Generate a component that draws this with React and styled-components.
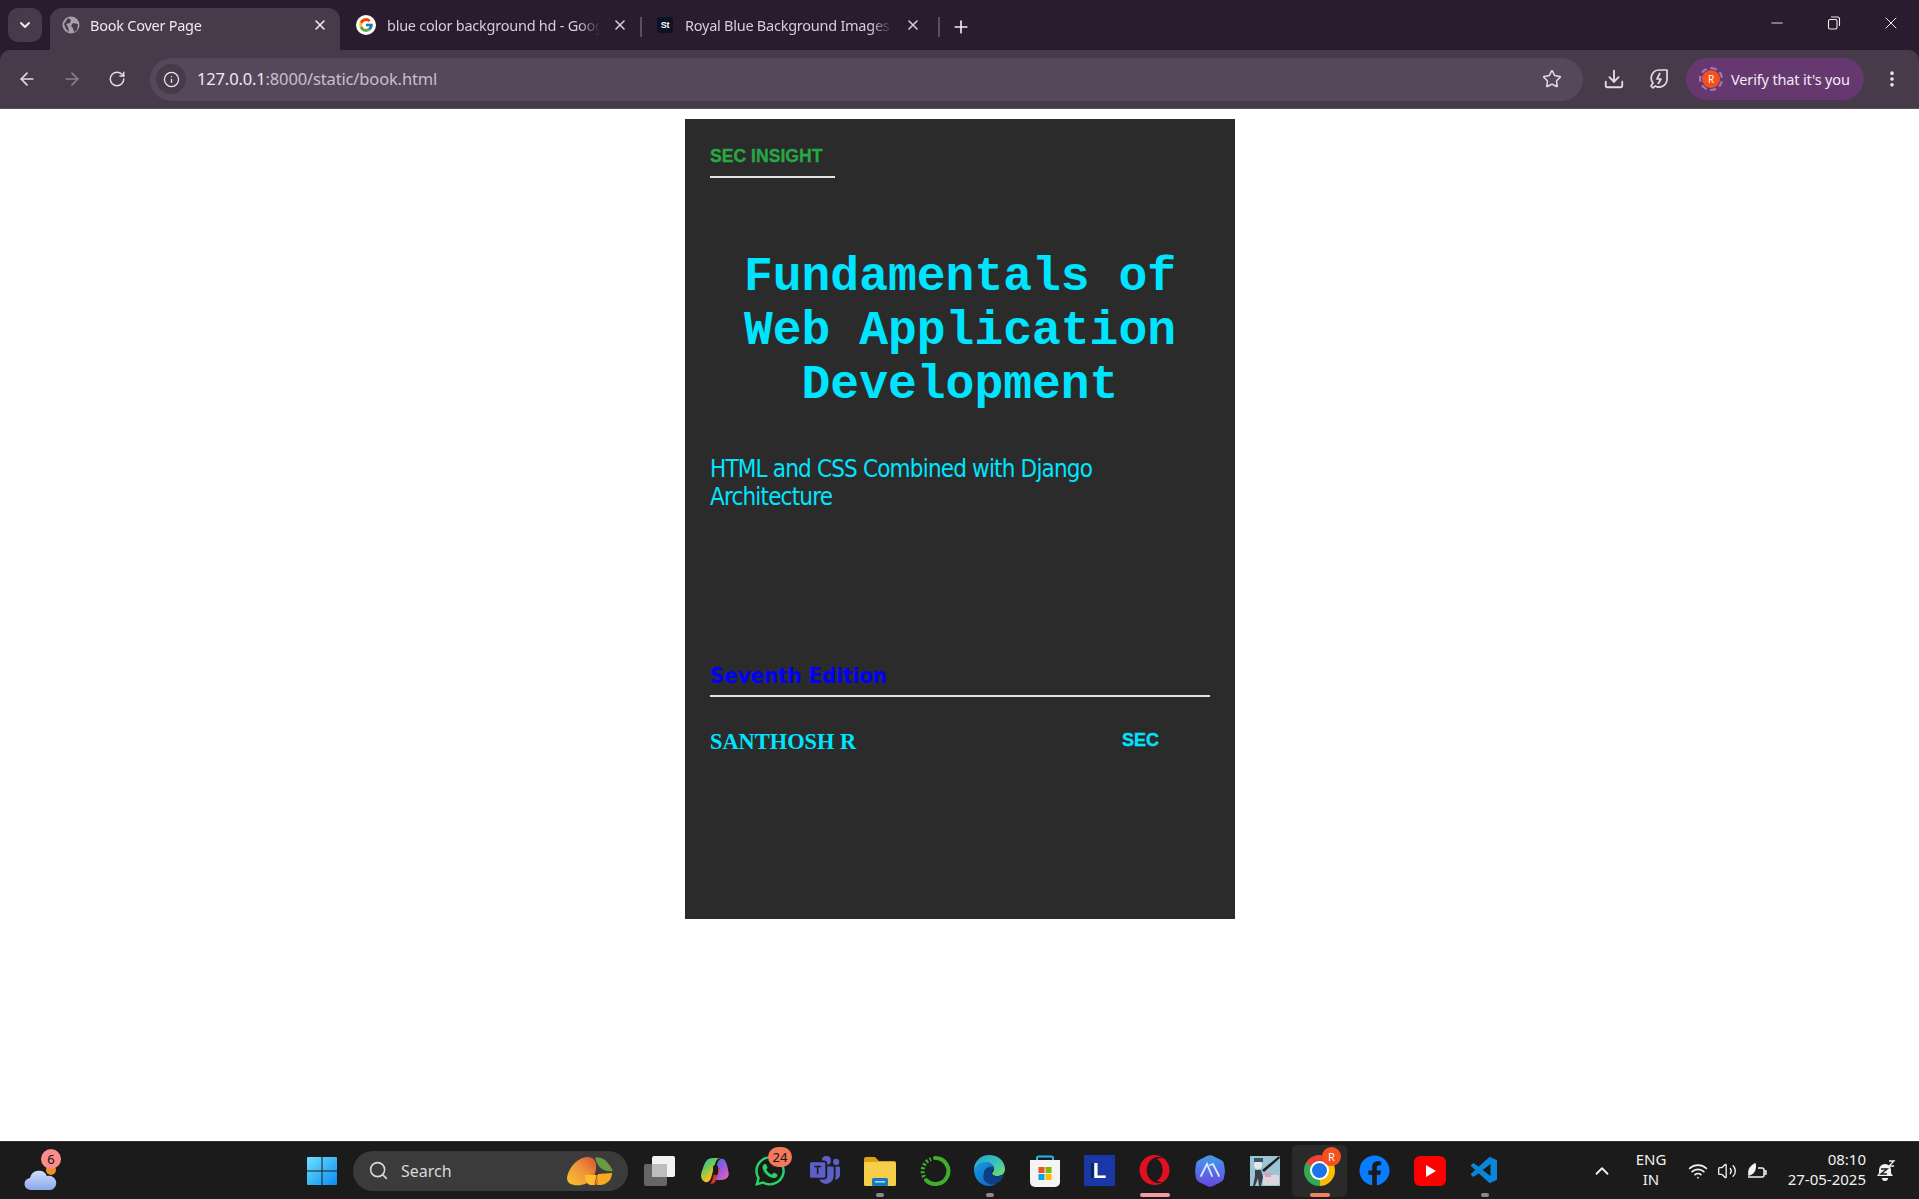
import React from "react";
import styled, { createGlobalStyle } from "styled-components";
import { ArrowLeft, ArrowRight, RotateCw, Info, Star, Download, MoreVertical, ChevronDown, ChevronUp, X, Plus, Minus, Search, Wifi, Volume2 } from "lucide-react";
import { FcGoogle } from "react-icons/fc";
import { FaWhatsapp, FaFacebook, FaOpera } from "react-icons/fa";
import { BsMicrosoftTeams } from "react-icons/bs";
import { VscVscode } from "react-icons/vsc";

const GlobalStyle = createGlobalStyle`
  html, body { margin: 0; padding: 0; background: #fff; }
  * { box-sizing: border-box; }
`;

const uiFont = `"Noto Sans", "Open Sans", sans-serif`;
const tahomaLike = `"DejaVu Sans Condensed", "DejaVu Sans", sans-serif`;

const Screen = styled.div`
  width: 1919px;
  height: 1199px;
  display: flex;
  flex-direction: column;
  overflow: hidden;
  background: #2a1c2e;
  font-family: ${uiFont};
`;

/* browser chrome */
const TabStrip = styled.div`
  height: 50px;
  flex: none;
  background: #2a1c2e;
  display: flex;
  align-items: flex-end;
  padding-left: 8px;
`;

const TabMenu = styled.div`
  width: 34px;
  height: 34px;
  margin: 0 8px 8px 0;
  border-radius: 10px;
  background: #463a4b;
  color: #f1e9f3;
  display: flex;
  align-items: center;
  justify-content: center;
`;

const Tab = styled.div`
  width: ${(p) => p.$w}px;
  height: 42px;
  flex: none;
  display: flex;
  align-items: center;
  padding: 0 ${(p) => p.$right || 12}px 8px ${(p) => p.$pad}px;
  border-radius: 12px 12px 0 0;
  background: ${(p) => (p.$active ? "#463a4b" : "transparent")};
  color: ${(p) => (p.$active ? "#f0e8f1" : "#d6cdd8")};
  font-size: 14.5px;
  letter-spacing: -0.25px;
`;

const TabTitle = styled.span`
  flex: 1;
  margin: 0 ${(p) => p.$end || 0}px 0 ${(p) => p.$gap}px;
  overflow: hidden;
  white-space: nowrap;
  -webkit-mask-image: linear-gradient(to right, #000 90%, transparent);
  mask-image: linear-gradient(to right, #000 90%, transparent);
`;

const TabSeparator = styled.div`
  width: 2px;
  height: 20px;
  margin-bottom: 13px;
  flex: none;
  background: #5b4f60;
`;

const NewTab = styled.div`
  margin: 0 0 13px 11px;
  color: #f0e8f1;
  display: flex;
`;

const WindowControls = styled.div`
  margin-left: auto;
  height: 100%;
  display: flex;
  align-items: center;
  color: #efe9f0;
  padding-bottom: 4px;
`;

const WindowButton = styled.div`
  width: 57px;
  display: flex;
  justify-content: center;
`;

const RestoreIcon = () => (
  <svg width="14" height="14" viewBox="0 0 14 14" fill="none" stroke="#efe9f0" strokeWidth="1.1">
    <rect x="1.5" y="3.5" width="8.5" height="9.5" rx="1.5" />
    <path d="M4 1h6.5a2 2 0 0 1 2 2v7" />
  </svg>
);

const Toolbar = styled.div`
  height: 59px;
  flex: none;
  background: #463a4b;
  border-bottom: 1px solid #5a4e5f;
  border-radius: 10px 10px 0 0;
  display: flex;
  align-items: center;
  padding-left: 4px;
  color: #d9cfdb;
`;

const NavButton = styled.div`
  width: 45px;
  display: flex;
  justify-content: center;
  color: ${(p) => (p.$dim ? "#8c7f90" : "#e3dbe5")};
`;

const AddressBar = styled.div`
  width: 1433px;
  height: 43px;
  margin-left: 11px;
  border-radius: 22px;
  background: #54485a;
  display: flex;
  align-items: center;
  padding: 0 21px 0 6px;
  font-size: 16.5px;
  line-height: 22px;
  letter-spacing: -0.15px;
  color: #c9bfcc;
`;

const InfoChip = styled.div`
  width: 30px;
  height: 30px;
  border-radius: 50%;
  background: #463a4b;
  color: #eee6ef;
  display: flex;
  align-items: center;
  justify-content: center;
  margin-right: 11px;
`;

const Host = styled.span`
  color: #f0e9f1;
`;

const StarSlot = styled.div`
  margin-left: auto;
  display: flex;
  color: #e3dbe5;
`;

const ToolGroup = styled.div`
  margin-left: 8px;
  display: flex;
`;

const ToolIcon = styled.div`
  width: 45px;
  display: flex;
  justify-content: center;
  color: #e3dbe5;
`;

const VerifyPill = styled.div`
  width: 178px;
  height: 42px;
  margin-left: 5px;
  border-radius: 21px;
  background: #65396f;
  color: #f3ebf4;
  display: flex;
  align-items: center;
  padding-left: 13px;
  font-size: 14.5px;
  letter-spacing: -0.15px;
  white-space: nowrap;
`;

const AvatarRing = styled.div`
  width: 24px;
  height: 24px;
  margin-right: 8px;
  border-radius: 50%;
  border: 2px dashed #a67ab4;
  display: flex;
  align-items: center;
  justify-content: center;
  flex: none;
`;

const Avatar = styled.div`
  width: 18px;
  height: 18px;
  border-radius: 50%;
  background: #f4511e;
  color: #fff;
  font-size: 10px;
  display: flex;
  align-items: center;
  justify-content: center;
`;

const KebabSlot = styled.div`
  margin-left: 18px;
  display: flex;
  color: #eee6ef;
`;

/* page */
const Page = styled.main`
  flex: 1;
  background: #fff;
  display: flex;
  justify-content: center;
  align-items: flex-start;
  padding-top: 10px;
`;

const Cover = styled.section`
  width: 550px;
  height: 800px;
  margin-left: 1px;
  padding: 25px;
  background: #2b2b2b;
  display: flex;
  flex-direction: column;
`;

const Brand = styled.div`
  width: 125px;
  padding: 2px 0 9px;
  border-bottom: 2px solid #e4e4e4;
  color: #28a745;
  font: bold 17.6px/21px "Liberation Sans", Arial, sans-serif;
  -webkit-text-stroke: 0.3px #28a745;
  white-space: nowrap;
`;

const Title = styled.h1`
  margin: 72px 0 0;
  color: #00e5ff;
  font: bold 48px/54px "Liberation Mono", "Courier New", monospace;
  text-align: center;
`;

const Subtitle = styled.p`
  margin: 43px 0 0;
  width: 420px;
  color: #00e5ff;
  font: 24px/28px ${tahomaLike};
  letter-spacing: -0.83px;
`;

const Edition = styled.div`
  margin-top: 153px;
  padding-bottom: 7px;
  border-bottom: 2px solid #e4e4e4;
  color: #0000ff;
  font: bold 22px/24px ${tahomaLike};
`;

const Credits = styled.div`
  margin-top: 33px;
  display: flex;
  justify-content: space-between;
  align-items: flex-start;
  color: #00e5ff;
`;

const Author = styled.div`
  font: bold 22.4px/24px "Liberation Serif", "Times New Roman", serif;
`;

const Publisher = styled.div`
  width: 88px;
  font: bold 18px/21px "Liberation Sans", Arial, sans-serif;
  -webkit-text-stroke: 0.3px #00e5ff;
`;

/* windows taskbar */
const Taskbar = styled.footer`
  height: 58px;
  flex: none;
  background: #1b1b1b;
  border-top: 1px solid #333;
  color: #f2f2f2;
  display: flex;
  align-items: center;
  font-family: ${uiFont};
`;

const Weather = styled.div`
  position: relative;
  width: 40px;
  height: 40px;
  margin: 0 230px 0 24px;
  display: flex;
  align-items: flex-end;
`;

const Count = styled.span`
  position: absolute;
  top: ${(p) => p.$top}px;
  right: ${(p) => p.$right}px;
  min-width: ${(p) => p.$w}px;
  height: 20px;
  padding: 0 3px;
  border-radius: 10px;
  background: ${(p) => p.$bg};
  color: #111;
  font-size: 13px;
  line-height: 20px;
  text-align: center;
`;

const TaskItem = styled.div`
  position: relative;
  width: ${(p) => p.$w || 55}px;
  height: 52px;
  flex: none;
  display: flex;
  align-items: center;
  justify-content: center;
  border-radius: 5px;
  background: ${(p) => (p.$open ? "#2a2a2a" : "transparent")};
`;

const RunDot = styled.i`
  position: absolute;
  bottom: 0;
  left: 50%;
  width: ${(p) => p.$w}px;
  height: 4px;
  border-radius: 2px;
  transform: translateX(-50%);
  background: ${(p) => p.$color};
`;

const SearchBox = styled.div`
  width: 275px;
  height: 40px;
  margin: 0 4px;
  flex: none;
  border-radius: 20px;
  background: #3b3b3b;
  display: flex;
  align-items: center;
  justify-content: space-between;
  padding: 0 14px 0 15px;
  font-size: 16px;
  color: #d8d8d8;
`;

const SearchLabel = styled.span`
  display: flex;
  align-items: center;
  gap: 12px;
`;

const Tray = styled.div`
  margin-left: auto;
  display: flex;
  align-items: center;
  height: 100%;
  padding-right: 18px;
`;

const TrayCell = styled.div`
  width: ${(p) => p.$w}px;
  display: flex;
  justify-content: center;
  flex: none;
`;

const Lang = styled.div`
  width: 50px;
  margin: 0 7px 0 9px;
  padding-bottom: 3px;
  font-size: 15px;
  line-height: 20px;
  text-align: center;
`;

const Clock = styled.div`
  width: 94px;
  margin-right: 5px;
  padding-bottom: 4px;
  font-size: 15px;
  line-height: 20px;
  text-align: right;
`;

const LetterTile = styled.div`
  width: 31px;
  height: 31px;
  background: #1a37a8;
  color: #fff;
  font: bold 22px/31px "Liberation Sans", sans-serif;
  text-align: center;
  text-shadow: -3px 0 #0c2050;
`;

const ChromeBall = styled.div`
  position: relative;
  width: 31px;
  height: 31px;
  border-radius: 50%;
  background: conic-gradient(#ea4335 0 17%, #fbbc04 17% 50%, #34a853 50% 83%, #ea4335 83%);
  display: flex;
  align-items: center;
  justify-content: center;
  &::after {
    content: "";
    width: 15px;
    height: 15px;
    border-radius: 50%;
    background: #1a73e8;
    border: 2px solid #fff;
  }
`;

const ChromeBadge = styled.span`
  position: absolute;
  top: 2px;
  right: 6px;
  width: 19px;
  height: 19px;
  border-radius: 50%;
  background: #f4511e;
  color: #fff;
  font-size: 11px;
  line-height: 19px;
  text-align: center;
`;

const SiteBadge = styled.span`
  width: 16px;
  height: 16px;
  border-radius: 3px;
  background: #0b1326;
  color: #fff;
  font: bold 9px/16px "Liberation Sans", sans-serif;
  text-align: center;
  flex: none;
`;

const GoogleChip = styled.span`
  width: 20px;
  height: 20px;
  border-radius: 50%;
  background: #fff;
  display: flex;
  align-items: center;
  justify-content: center;
  flex: none;
`;

const GlobeFavicon = () => (
  <svg width="18" height="18" viewBox="0 0 18 18">
    <circle cx="9" cy="9" r="8.5" fill="#a79fab" />
    <path d="M6 2l3 2-1 3-4 1 2 3 1 5-3-3-2-5zM11 7l5 1-1 6-3 2-1-4-2-2z" fill="#463a4b" />
  </svg>
);

const EnergyIcon = () => (
  <svg width="20" height="22" viewBox="0 0 20 22" fill="none" stroke="#e3dbe5" strokeWidth="1.7" strokeLinejoin="round">
    <path d="M18 2H10a8 8 0 0 0-6 13l-2 3 2 2 2-2a8 8 0 0 0 12-6z" />
    <path d="M11 5l-3 6h4l-3 5" />
  </svg>
);

const WeatherIcon = () => (
  <svg width="34" height="28" viewBox="0 0 34 28">
    <defs>
      <linearGradient id="cloud" x1="0" y1="0" x2="0" y2="1">
        <stop offset="0" stopColor="#cfe0fb" />
        <stop offset="1" stopColor="#8aa8e8" />
      </linearGradient>
    </defs>
    <circle cx="27" cy="7" r="5" fill="#f28c28" />
    <path d="M7 27a6 6 0 0 1-1-12 9 9 0 0 1 17-2 7 7 0 0 1 4 14z" fill="url(#cloud)" />
  </svg>
);

const WindowsLogo = () => (
  <svg width="30" height="30" viewBox="0 0 30 30">
    <defs>
      <linearGradient id="win" x1="0" y1="0" x2="1" y2="1">
        <stop offset="0" stopColor="#6fe0ff" />
        <stop offset="1" stopColor="#0a8cf0" />
      </linearGradient>
    </defs>
    <path d="M1 1h13.5v13.5H0V2a1 1 0 0 1 1-1zM15.5 1H29a1 1 0 0 1 1 1v12.5H15.5zM0 15.5h14.5V29H1a1 1 0 0 1-1-1zM15.5 15.5H30V28a1 1 0 0 1-1 1H15.5z" fill="url(#win)" />
  </svg>
);

const MangoIcon = () => (
  <svg width="47" height="30" viewBox="0 0 47 30">
    <defs>
      <linearGradient id="mango" x1="0" y1="1" x2="1" y2="0">
        <stop offset="0" stopColor="#f7c531" />
        <stop offset=".55" stopColor="#f0913a" />
        <stop offset="1" stopColor="#d9502e" />
      </linearGradient>
    </defs>
    <path d="M0 22C2 10 12 1 21 1c6 0 9 5 8 12-1 8-6 15-15 16C6 30 0 28 0 22z" fill="url(#mango)" />
    <path d="M28 2c7-2 13 3 18 13-8 1-15-2-18-13z" fill="#6b9a45" />
    <path d="M18 19h14l-3 10h-6c-3-1-5-5-5-10z" fill="#f9c02c" />
    <path d="M31 18l14-1c0 6-4 11-11 12h-4z" fill="#f7a91f" />
    <path d="M30 19l-2 10" stroke="#e2552b" strokeWidth="1.5" />
  </svg>
);

const TaskViewIcon = () => (
  <svg width="31" height="30" viewBox="0 0 31 30">
    <rect x="8" y="0" width="23" height="21" rx="2" fill="#f2f2f2" />
    <rect x="0" y="8" width="23" height="22" rx="2" fill="#6f6f6f" fillOpacity=".9" />
    <rect x="8" y="8" width="15" height="13" fill="#bdbdbd" />
  </svg>
);

const CopilotIcon = () => (
  <svg width="28" height="26" viewBox="0 0 28 26">
    <defs>
      <linearGradient id="cop1" x1="0" y1="0" x2=".7" y2="1">
        <stop offset="0" stopColor="#22b8d8" />
        <stop offset=".35" stopColor="#5fca62" />
        <stop offset=".75" stopColor="#f4c020" />
        <stop offset="1" stopColor="#f08020" />
      </linearGradient>
      <linearGradient id="cop2" x1="0" y1="0" x2="1" y2="1">
        <stop offset="0" stopColor="#2b74e8" />
        <stop offset=".5" stopColor="#9a58e0" />
        <stop offset="1" stopColor="#f068a8" />
      </linearGradient>
    </defs>
    <path d="M16 6c1-3 3-6 6-5 2 0 3 3 4 6l1.5 7c1 5-2 8-7 8h-7z" fill="url(#cop2)" />
    <path d="M12 0h8c-4 0-5 3-6 6l-4 14c-1 3-3 5-6 4-2-1-4-3-4-6 0-3 1-5 2-8 2-6 4-10 10-10z" fill="url(#cop1)" />
    <path d="M14 10h5l-4 12c-1 3-3 4-6 4 2-2 3-5 5-16z" fill="#d8342c" />
    <rect x="12" y="7" width="5" height="10" rx="2" fill="#1b1b1b" />
  </svg>
);

const FilesIcon = () => (
  <svg width="32" height="30" viewBox="0 0 32 30">
    <path d="M0 3a2 2 0 0 1 2-2h9l4 4h15a2 2 0 0 1 2 2v3H0z" fill="#d9a114" />
    <rect x="0" y="6" width="32" height="24" rx="1.5" fill="#f7ce4a" />
    <rect x="8" y="22" width="16" height="8" rx="1.5" fill="#1a78c2" />
    <rect x="11" y="25" width="10" height="1.6" fill="#a8d8f5" />
  </svg>
);

const RingIcon = () => (
  <svg width="32" height="32" viewBox="0 0 32 32" fill="none">
    <path d="M16 3a13 13 0 1 1-9 22" stroke="#3fae2a" strokeWidth="4" strokeLinecap="round" />
    <path d="M5 22a13 13 0 0 1 7-18" stroke="#3fae2a" strokeWidth="4" strokeDasharray="2 2" />
  </svg>
);

const EdgeIcon = () => (
  <svg width="31" height="31" viewBox="0 0 31 31">
    <defs>
      <linearGradient id="edgeA" x1="0" y1="0" x2="1" y2="1">
        <stop offset="0" stopColor="#1f9fd8" />
        <stop offset=".6" stopColor="#3ec8b0" />
        <stop offset="1" stopColor="#7ee060" />
      </linearGradient>
      <linearGradient id="edgeB" x1="0" y1="0" x2="1" y2="1">
        <stop offset="0" stopColor="#1a9ae8" />
        <stop offset="1" stopColor="#0d5fb8" />
      </linearGradient>
    </defs>
    <path d="M0 15C0 6 7 0 15 0c9 0 16 6 16 14 0 5-4 7-8 7-3 0-5-1-5-3 1-1 2-2 2-4-1-3-4-4-8-4-6 0-9 3-12 5z" fill="url(#edgeA)" />
    <path d="M0 15c2-5 7-8 12-8 4 0 7 2 8 5-3-1-7 0-9 3-2 4-1 9 4 12 2 1 5 2 8 1-2 2-5 3-8 3C7 31 0 24 0 15z" fill="url(#edgeB)" />
    <path d="M11 15c2-3 6-4 9-3 0 2-1 3-2 4-1 3 2 6 6 5 3 0 5-1 6-2-1 5-5 9-9 10-3 1-6 0-8-1-5-3-4-9-2-13z" fill="#0d3f86" />
  </svg>
);

const StoreIcon = () => (
  <svg width="32" height="32" viewBox="0 0 32 32">
    <path d="M8 7V3a1.5 1.5 0 0 1 1.5-1.5h13A1.5 1.5 0 0 1 24 3v4" fill="none" stroke="#27b4f0" strokeWidth="2" />
    <path d="M1 5h30v22a5 5 0 0 1-5 5H6a5 5 0 0 1-5-5z" fill="#f4f4f4" />
    <rect x="9.5" y="12" width="6" height="6" fill="#f25022" />
    <rect x="16.5" y="12" width="6" height="6" fill="#7fba00" />
    <rect x="9.5" y="19" width="6" height="6" fill="#00a4ef" />
    <rect x="16.5" y="19" width="6" height="6" fill="#ffb900" />
  </svg>
);

const AgentIcon = () => (
  <svg width="30" height="32" viewBox="0 0 30 32">
    <defs>
      <linearGradient id="hex" x1="0" y1="0" x2="0" y2="1">
        <stop offset="0" stopColor="#3f9fe8" />
        <stop offset="1" stopColor="#6a45e0" />
      </linearGradient>
    </defs>
    <path d="M12 1a6 6 0 0 1 6 0l8 4a5 5 0 0 1 3 4l1 7-1 7a5 5 0 0 1-3 4l-8 4a6 6 0 0 1-6 0l-8-4a5 5 0 0 1-3-4l-1-7 1-7a5 5 0 0 1 3-4z" fill="url(#hex)" />
    <path d="M6 21l6-12 5 12M15 10l3-1 6 12" fill="none" stroke="#dfe8ff" strokeWidth="1.8" strokeLinecap="round" />
  </svg>
);

const PosterIcon = () => (
  <svg width="30" height="30" viewBox="0 0 30 30">
    <rect width="30" height="30" fill="#9cc4d4" />
    <path d="M29 0l1 2-16 14-2-2z" fill="#1f1f1f" />
    <circle cx="8" cy="9" r="4" fill="#e8e8e8" />
    <path d="M4 2h9v4H4z" fill="#35566b" />
    <path d="M5 14h6l2 7-2 9H9l-1-8-3 8H3l2-10z" fill="#3a3f45" />
    <rect x="13" y="19" width="16" height="10" rx="1" fill="#dcd6dc" />
    <rect x="15" y="17" width="6" height="4" fill="#e29ab8" />
  </svg>
);

const YoutubeIcon = () => (
  <svg width="32" height="30" viewBox="0 0 32 30">
    <rect y="0" width="32" height="30" rx="6" fill="#f00" />
    <path d="M12 9l10 6-10 6z" fill="#fff" />
  </svg>
);

const BatteryLeafIcon = () => (
  <svg width="22" height="18" viewBox="0 0 22 18" fill="none" stroke="#f2f2f2" strokeWidth="1.5">
    <path d="M2 15h14a2 2 0 0 0 2-2V8a2 2 0 0 0-2-2h-4M18 9h2v3h-2" />
    <path d="M3 13c-1-5 2-9 6-11 1 4 0 9-6 11z" fill="#f2f2f2" />
  </svg>
);

const BellSnoozeIcon = () => (
  <svg width="20" height="22" viewBox="0 0 20 22" fill="#f2f2f2">
    <path d="M9 4a6 6 0 0 1 6 6v3l2 3H1l2-3v-3a6 6 0 0 1 6-6zM6 18h6a3 3 0 0 1-6 0z" />
    <path d="M5 9h6l-6 5h6" fill="none" stroke="#1b1b1b" strokeWidth="1.5" />
    <path d="M13 1h5l-5 5h5" fill="none" stroke="#f2f2f2" strokeWidth="1.3" />
  </svg>
);

const App = () => {
  return (
    <Screen>
      <GlobalStyle />
      <TabStrip>
        <TabMenu><ChevronDown size={16} strokeWidth={3} /></TabMenu>
        <Tab $active $w={290} $pad={12}>
          <GlobeFavicon />
          <TabTitle $gap={10}>Book Cover Page</TabTitle>
          <X size={16} strokeWidth={2.4} />
        </Tab>
        <Tab $w={300} $pad={16}>
          <GoogleChip><FcGoogle size={16} /></GoogleChip>
          <TabTitle $gap={11} $end={12}>blue color background hd - Google</TabTitle>
          <X size={16} strokeWidth={2.4} />
        </Tab>
        <TabSeparator />
        <Tab $w={296} $pad={15} $right={17}>
          <SiteBadge>St</SiteBadge>
          <TabTitle $gap={12} $end={13}>Royal Blue Background Images - Free</TabTitle>
          <X size={16} strokeWidth={2.4} />
        </Tab>
        <TabSeparator />
        <NewTab><Plus size={20} strokeWidth={2} /></NewTab>
        <WindowControls>
          <WindowButton><Minus size={18} strokeWidth={1.2} /></WindowButton>
          <WindowButton><RestoreIcon /></WindowButton>
          <WindowButton><X size={20} strokeWidth={1.2} /></WindowButton>
        </WindowControls>
      </TabStrip>

      <Toolbar>
        <NavButton><ArrowLeft size={20} strokeWidth={2} /></NavButton>
        <NavButton $dim><ArrowRight size={20} strokeWidth={2} /></NavButton>
        <NavButton><RotateCw size={18} strokeWidth={2} /></NavButton>
        <AddressBar>
          <InfoChip><Info size={17} strokeWidth={1.8} /></InfoChip>
          <span><Host>127.0.0.1</Host>:8000/static/book.html</span>
          <StarSlot><Star size={20} strokeWidth={1.8} /></StarSlot>
        </AddressBar>
        <ToolGroup>
          <ToolIcon><Download size={22} strokeWidth={2} /></ToolIcon>
          <ToolIcon><EnergyIcon /></ToolIcon>
        </ToolGroup>
        <VerifyPill>
          <AvatarRing><Avatar>R</Avatar></AvatarRing>
          Verify that it's you
        </VerifyPill>
        <KebabSlot><MoreVertical size={20} strokeWidth={2.4} /></KebabSlot>
      </Toolbar>

      <Page>
        <Cover>
          <Brand>SEC INSIGHT</Brand>
          <Title>Fundamentals of Web Application Development</Title>
          <Subtitle>HTML and CSS Combined with Django Architecture</Subtitle>
          <Edition>Seventh Edition</Edition>
          <Credits>
            <Author>SANTHOSH R</Author>
            <Publisher>SEC</Publisher>
          </Credits>
        </Cover>
      </Page>

      <Taskbar>
        <Weather>
          <WeatherIcon />
          <Count $top={-2} $right={3} $w={20} $bg="#fb8c8c">6</Count>
        </Weather>
        <TaskItem><WindowsLogo /></TaskItem>
        <SearchBox>
          <SearchLabel><Search size={21} strokeWidth={1.8} />Search</SearchLabel>
          <MangoIcon />
        </SearchBox>
        <TaskItem><TaskViewIcon /></TaskItem>
        <TaskItem><CopilotIcon /></TaskItem>
        <TaskItem>
          <FaWhatsapp size={34} color="#25d366" />
          <Count $top={2} $right={5} $w={24} $bg="#f4795b">24</Count>
        </TaskItem>
        <TaskItem><BsMicrosoftTeams size={30} color="#5b5fc7" /></TaskItem>
        <TaskItem><FilesIcon /><RunDot $w={8} $color="#8a8a8a" /></TaskItem>
        <TaskItem><RingIcon /></TaskItem>
        <TaskItem><EdgeIcon /><RunDot $w={8} $color="#8a8a8a" /></TaskItem>
        <TaskItem><StoreIcon /></TaskItem>
        <TaskItem><LetterTile>L</LetterTile></TaskItem>
        <TaskItem><FaOpera size={31} color="#e0101f" /><RunDot $w={30} $color="#f79aa6" /></TaskItem>
        <TaskItem><AgentIcon /></TaskItem>
        <TaskItem><PosterIcon /></TaskItem>
        <TaskItem $open>
          <ChromeBall />
          <ChromeBadge>R</ChromeBadge>
          <RunDot $w={20} $color="#f08060" />
        </TaskItem>
        <TaskItem><FaFacebook size={31} color="#0a7cff" /></TaskItem>
        <TaskItem><YoutubeIcon /></TaskItem>
        <TaskItem><VscVscode size={32} color="#0a86d8" /><RunDot $w={8} $color="#8a8a8a" /></TaskItem>
        <Tray>
          <TrayCell $w={30}><ChevronUp size={22} strokeWidth={2} /></TrayCell>
          <Lang>ENG<br />IN</Lang>
          <TrayCell $w={29}><Wifi size={20} strokeWidth={2} /></TrayCell>
          <TrayCell $w={30}><Volume2 size={20} strokeWidth={1.6} /></TrayCell>
          <TrayCell $w={30}><BatteryLeafIcon /></TrayCell>
          <Clock>08:10<br />27-05-2025</Clock>
          <TrayCell $w={30}><BellSnoozeIcon /></TrayCell>
        </Tray>
      </Taskbar>
    </Screen>
  );
};

export default App;
